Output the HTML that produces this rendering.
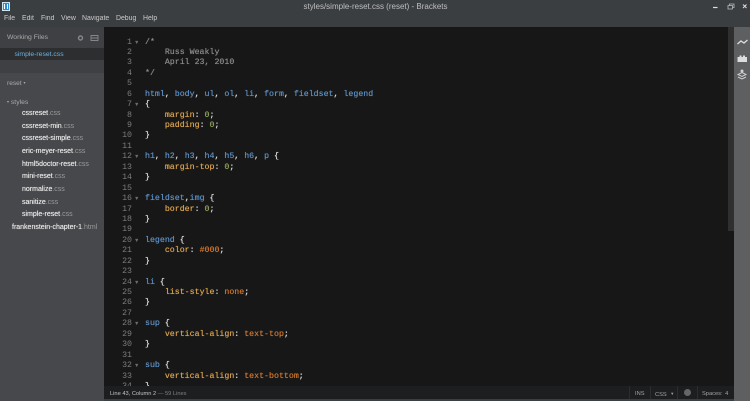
<!DOCTYPE html>
<html><head><meta charset="utf-8">
<style>
html,body{margin:0;padding:0;width:750px;height:401px;overflow:hidden;background:#3c3f41}
*{box-sizing:border-box}
.a{position:absolute;white-space:pre}
.s{font-family:"Liberation Sans",sans-serif;filter:blur(.25px)}
#top{left:0;top:0;width:750px;height:27px;background:#3b3e41}
#side{left:0;top:27px;width:104px;height:374px;background:#47484b}
#ed{left:104px;top:27px;width:630px;height:359px;background:#171717;overflow:hidden}
#wf{left:0;top:27px;width:104px;height:46px;background:#3e4043}
#sel{left:0;top:48px;width:104px;height:12px;background:#2d2e30}
#tb{left:734px;top:27px;width:16px;height:374px;background:#5e5f60}
#sb{left:104px;top:386px;width:630px;height:13px;background:#1d1e1f}
.m{top:13.500px;font-size:6.900px;line-height:10px;color:#c8c9ca}
.f{left:22px;font-size:7px;line-height:10px;color:#e6e6e6;text-shadow:0 0 .5px #e6e6e6}
.f i{font-style:normal;color:#9a9b9d;text-shadow:none}
#code{left:41px;top:10.500px;font-family:"Liberation Mono",monospace;font-size:8.270px;line-height:10.440px;color:#dedede;text-shadow:0 0 .5px currentColor}
#nums{left:0;top:10.500px;width:28px;text-align:right;font-family:"Liberation Mono",monospace;font-size:8.270px;line-height:10.440px;color:#7c7c7c}
#fold{left:30px;top:10.500px;font-family:"Liberation Sans",sans-serif;font-size:5.500px;line-height:10.440px;color:#6c6c6c}
.c{color:#8a8a8a}.b{color:#5d8fc4}.o{color:#d9a24d}.g{color:#8fa35a}.r{color:#d0762d}
</style></head><body>
<div class="a" id="top"></div>
<div class="a" style="left:2px;top:2px;width:8px;height:9px;background:#2a8fd0;border:1px solid #cfe6f5"></div>
<div class="a" style="left:4px;top:4px;width:4px;height:5px;border-left:1px solid #fff;border-right:1px solid #fff"></div>
<div class="a s m" style="left:4px">File</div>
<div class="a s m" style="left:22px">Edit</div>
<div class="a s m" style="left:41px">Find</div>
<div class="a s m" style="left:61px">View</div>
<div class="a s m" style="left:82px">Navigate</div>
<div class="a s m" style="left:116px">Debug</div>
<div class="a s m" style="left:143px">Help</div>
<div class="a s" style="left:303.500px;top:2px;font-size:8px;line-height:10px;color:#bdbebf">styles/simple-reset.css (reset) - Brackets</div>
<svg class="a" style="left:700px;top:0;width:50px;height:14px" viewBox="0 0 50 14">
<path d="M13 7.500h4.500" stroke="#ddd" stroke-width="1.200" fill="none"/>
<path d="M28 5.500h4.500v3.500h-4.500zM29.500 5.500v-1.500h4.500v3.500h-1.500" stroke="#bbb" stroke-width=".8" fill="none"/>
<path d="M43 4.500l3.500 3.500M46.500 4.500l-3.500 3.500" stroke="#ddd" stroke-width="1" fill="none"/>
</svg>
<div class="a" id="side"></div>
<div class="a" id="wf"></div>
<div class="a" id="sel"></div>
<div class="a s" style="left:7px;top:33px;font-size:6.800px;line-height:10px;color:#a9aaab">Working Files</div>
<svg class="a" style="left:76px;top:33px;width:26px;height:10px" viewBox="0 0 26 10">
<circle cx="4.500" cy="5" r="2" fill="none" stroke="#85878a" stroke-width="1.400"/>
<path d="M15 2.500h7v5h-7zM15 5h7" stroke="#85878a" stroke-width=".9" fill="none"/>
</svg>
<div class="a s" style="left:14.500px;top:49.500px;font-size:6.800px;line-height:10px;color:#6fb3e0">simple-reset.css</div>
<div class="a s" style="left:7px;top:78px;font-size:6.600px;line-height:10px;color:#a9aaab">reset <span style="font-size:4px;vertical-align:1px">▾</span></div>
<div class="a s" style="left:7px;top:96.500px;font-size:6.800px;line-height:10px;color:#a9aaab"><span style="font-size:4px;vertical-align:1px">▾</span> styles</div>
<div class="a s f" style="top:109px">cssreset<i>.css</i></div>
<div class="a s f" style="top:121.700px">cssreset-min<i>.css</i></div>
<div class="a s f" style="top:134.300px">cssreset-simple<i>.css</i></div>
<div class="a s f" style="top:147px">eric-meyer-reset<i>.css</i></div>
<div class="a s f" style="top:159.700px">html5doctor-reset<i>.css</i></div>
<div class="a s f" style="top:172.300px">mini-reset<i>.css</i></div>
<div class="a s f" style="top:185px">normalize<i>.css</i></div>
<div class="a s f" style="top:197.700px">sanitize<i>.css</i></div>
<div class="a s f" style="top:210.300px">simple-reset<i>.css</i></div>
<div class="a s f" style="left:12px;top:223px">frankenstein-chapter-1<i>.html</i></div>
<div class="a" id="ed">
<div class="a" id="nums">1
2
3
4
5
6
7
8
9
10
11
12
13
14
15
16
17
18
19
20
21
22
23
24
25
26
27
28
29
30
31
32
33
34</div>
<div class="a" id="fold">▼




 
▼




▼



▼



▼



▼



▼



▼</div>
<div class="a" id="code"><span class="c">/*
    Russ Weakly
    April 23, 2010
*/</span>

<span class="b">html</span>, <span class="b">body</span>, <span class="b">ul</span>, <span class="b">ol</span>, <span class="b">li</span>, <span class="b">form</span>, <span class="b">fieldset</span>, <span class="b">legend</span>
{
    <span class="o">margin</span>: <span class="g">0</span>;
    <span class="o">padding</span>: <span class="g">0</span>;
}

<span class="b">h1</span>, <span class="b">h2</span>, <span class="b">h3</span>, <span class="b">h4</span>, <span class="b">h5</span>, <span class="b">h6</span>, <span class="b">p</span> {
    <span class="o">margin-top</span>: <span class="g">0</span>;
}

<span class="b">fieldset</span>,<span class="b">img</span> {
    <span class="o">border</span>: <span class="g">0</span>;
}

<span class="b">legend</span> {
    <span class="o">color</span>: <span class="r">#000</span>;
}

<span class="b">li</span> {
    <span class="o">list-style</span>: <span class="r">none</span>;
}

<span class="b">sup</span> {
    <span class="o">vertical-align</span>: <span class="r">text-top</span>;
}

<span class="b">sub</span> {
    <span class="o">vertical-align</span>: <span class="r">text-bottom</span>;
}</div>
<div class="a" style="left:624px;top:0;width:6px;height:204px;background:#2f2f2f"></div>
</div>
<div class="a" id="tb"></div>
<svg class="a" style="left:734px;top:34px;width:16px;height:50px" viewBox="0 0 16 50">
<path d="M3.500 10l3.500-3 3 2 3.500-3" stroke="#ddd" stroke-width="1.300" fill="none"/>
<path d="M3.500 28v-5h2v-1.500h2v1.500h1.500v-1.500h2v1.500h2v5z" fill="#ddd"/>
<path d="M8 38.500l4 2-4 2-4-2zM4 43l4 2 4-2" stroke="#d0d0d0" stroke-width="1" fill="none"/>
<circle cx="8" cy="37" r="1.500" fill="#d0d0d0"/>
</svg>
<div class="a" id="sb"></div>
<div class="a s" style="left:110px;top:388.500px;font-size:5.700px;line-height:10px;color:#c4c4c4">Line 43, Column 2 <span style="color:#808080">— 59 Lines</span></div>
<div class="a" style="left:629px;top:386px;width:1px;height:13px;background:#2c2d2e"></div>
<div class="a" style="left:650px;top:386px;width:1px;height:13px;background:#2c2d2e"></div>
<div class="a" style="left:677px;top:386px;width:1px;height:13px;background:#2c2d2e"></div>
<div class="a" style="left:697px;top:386px;width:1px;height:13px;background:#2c2d2e"></div>
<div class="a s" style="left:635px;top:388.500px;font-size:5.700px;line-height:10px;color:#a5a5a5">INS</div>
<div class="a s" style="left:655px;top:388.500px;font-size:5.700px;line-height:10px;color:#a5a5a5">CSS <span style="font-size:4px;margin-left:2px;vertical-align:1px">▼</span></div>
<div class="a" style="left:683.500px;top:389px;width:7px;height:7px;border-radius:50%;background:#666"></div>
<div class="a s" style="left:702px;top:388.500px;font-size:5.700px;line-height:10px;color:#a5a5a5">Spaces: <span style="margin-left:1px">4</span></div>
</body></html>
